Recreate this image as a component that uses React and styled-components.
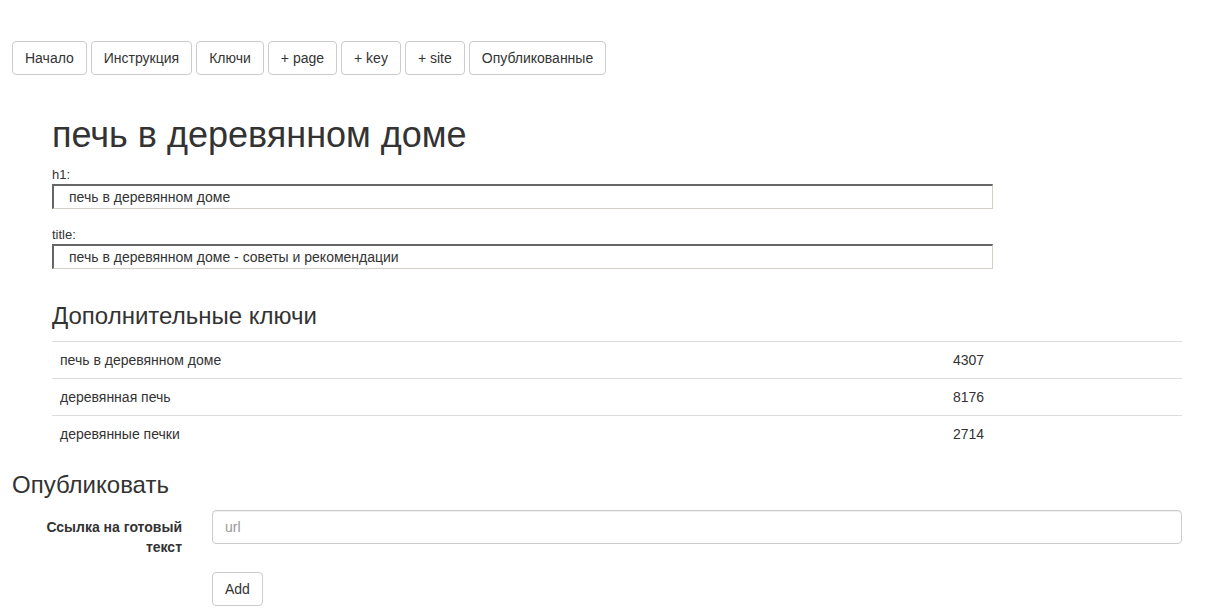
import styled, { createGlobalStyle } from "styled-components";

const GlobalStyle = createGlobalStyle`
  * { box-sizing: border-box; }
  body {
    margin: 0;
    background: #fff;
    color: #333;
    font-family: "Liberation Sans", Arial, sans-serif;
    font-size: 14px;
    line-height: 1.42857;
  }
`;

const navItems = ["Начало", "Инструкция", "Ключи", "+ page", "+ key", "+ site", "Опубликованные"];

const keys = [
  { phrase: "печь в деревянном доме", count: 4307 },
  { phrase: "деревянная печь", count: 8176 },
  { phrase: "деревянные печки", count: 2714 },
];

const App = () => {
  return (
    <Page>
      <GlobalStyle />
      <Nav>
        {navItems.map((item) => (
          <Button key={item}>{item}</Button>
        ))}
      </Nav>

      <Article>
        <Title>печь в деревянном доме</Title>
        <Field>
          <Label>h1:</Label>
          <InsetInput defaultValue="печь в деревянном доме" />
        </Field>
        <Field>
          <Label>title:</Label>
          <InsetInput defaultValue="печь в деревянном доме - советы и рекомендации" />
        </Field>

        <SubTitle $top={34}>Дополнительные ключи</SubTitle>
        <Table>
          <tbody>
            {keys.map((k) => (
              <tr key={k.phrase}>
                <Cell>{k.phrase}</Cell>
                <NumCell>{k.count}</NumCell>
              </tr>
            ))}
          </tbody>
        </Table>
      </Article>

      <SubTitle>Опубликовать</SubTitle>
      <FormRow>
        <FormLabel>Ссылка на готовый текст</FormLabel>
        <FormControl placeholder="url" />
      </FormRow>
      <FormRow>
        <FormLabel />
        <div>
          <Button>Add</Button>
        </div>
      </FormRow>
    </Page>
  );
};

const Page = styled.div`
  width: 1170px;
  margin-left: 12px;
  padding-top: 41px;
`;

const Nav = styled.div`
  display: flex;
  gap: 4px;
`;

const Button = styled.button`
  display: inline-block;
  height: 34px;
  padding: 6px 12px;
  font-family: inherit;
  font-size: 14px;
  line-height: 20px;
  color: #333;
  background: #fff;
  border: 1px solid #ccc;
  border-radius: 4px;
  cursor: pointer;
`;

const Article = styled.div`
  margin-left: 40px;
`;

const Title = styled.h1`
  margin: 40px 0 10px;
  font-size: 36px;
  font-weight: 500;
  line-height: 40px;
`;

const Field = styled.div`
  display: flex;
  flex-direction: column;
  margin-bottom: 16px;
`;

const Label = styled.label`
  font-size: 13px;
  line-height: 19px;
`;

const InsetInput = styled.input`
  width: 941px;
  height: 25px;
  padding: 0 15px;
  font-family: inherit;
  font-size: 14px;
  color: #333;
  border-style: solid;
  border-width: 2px 1px 1px 2px;
  border-color: #666 #d4d0c8 #d4d0c8 #666;
  outline: none;
`;

const SubTitle = styled.h3`
  margin: ${(p) => p.$top ?? 20}px 0 12px;
  font-size: 24px;
  font-weight: 500;
  line-height: 26px;
`;

const Table = styled.table`
  width: 100%;
  border-collapse: collapse;
  margin-bottom: 18px;
`;

const Cell = styled.td`
  padding: 8px;
  line-height: 20px;
  border-top: 1px solid #ddd;
  font-size: 14px;
`;

const NumCell = styled(Cell)`
  width: 237px;
`;

const FormRow = styled.div`
  display: grid;
  grid-template-columns: 170px 1fr;
  column-gap: 30px;
  margin-bottom: 15px;
`;

const FormLabel = styled.label`
  padding-top: 7px;
  text-align: right;
  font-weight: bold;
  font-size: 14px;
  line-height: 20px;
`;

const FormControl = styled.input`
  height: 34px;
  padding: 6px 12px;
  font-family: inherit;
  font-size: 14px;
  color: #555;
  border: 1px solid #ccc;
  border-radius: 4px;
  box-shadow: inset 0 1px 1px rgba(0, 0, 0, 0.075);
  outline: none;
  &::placeholder { color: #999; }
`;

export default App;
